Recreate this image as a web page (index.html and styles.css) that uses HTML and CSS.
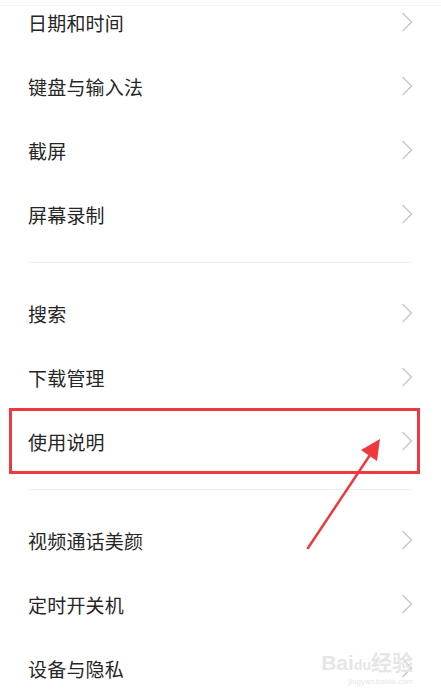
FILE: index.html
```html
<!DOCTYPE html>
<html lang="zh">
<head>
<meta charset="utf-8">
<link rel="stylesheet" href="styles.css">
</head>
<body>
<div class="page">
  <div class="topline"></div>
  <div class="list">
    <div class="group">
      <div class="row"><span class="label">日期和时间</span><svg class="chev" width="12" height="20" viewBox="0 0 12 20"><polyline points="1.5,1 10.5,10 1.5,19" fill="none" stroke="#cbcbcb" stroke-width="1.6"/></svg></div>
      <div class="row"><span class="label">键盘与输入法</span><svg class="chev" width="12" height="20" viewBox="0 0 12 20"><polyline points="1.5,1 10.5,10 1.5,19" fill="none" stroke="#cbcbcb" stroke-width="1.6"/></svg></div>
      <div class="row"><span class="label">截屏</span><svg class="chev" width="12" height="20" viewBox="0 0 12 20"><polyline points="1.5,1 10.5,10 1.5,19" fill="none" stroke="#cbcbcb" stroke-width="1.6"/></svg></div>
      <div class="row"><span class="label">屏幕录制</span><svg class="chev" width="12" height="20" viewBox="0 0 12 20"><polyline points="1.5,1 10.5,10 1.5,19" fill="none" stroke="#cbcbcb" stroke-width="1.6"/></svg></div>
    </div>
    <div class="divider"></div>
    <div class="group">
      <div class="row"><span class="label">搜索</span><svg class="chev" width="12" height="20" viewBox="0 0 12 20"><polyline points="1.5,1 10.5,10 1.5,19" fill="none" stroke="#cbcbcb" stroke-width="1.6"/></svg></div>
      <div class="row"><span class="label">下载管理</span><svg class="chev" width="12" height="20" viewBox="0 0 12 20"><polyline points="1.5,1 10.5,10 1.5,19" fill="none" stroke="#cbcbcb" stroke-width="1.6"/></svg></div>
      <div class="row highlight"><span class="label">使用说明</span><svg class="chev" width="12" height="20" viewBox="0 0 12 20"><polyline points="1.5,1 10.5,10 1.5,19" fill="none" stroke="#cbcbcb" stroke-width="1.6"/></svg></div>
    </div>
    <div class="divider"></div>
    <div class="group">
      <div class="row"><span class="label">视频通话美颜</span><svg class="chev" width="12" height="20" viewBox="0 0 12 20"><polyline points="1.5,1 10.5,10 1.5,19" fill="none" stroke="#cbcbcb" stroke-width="1.6"/></svg></div>
      <div class="row"><span class="label">定时开关机</span><svg class="chev" width="12" height="20" viewBox="0 0 12 20"><polyline points="1.5,1 10.5,10 1.5,19" fill="none" stroke="#cbcbcb" stroke-width="1.6"/></svg></div>
      <div class="row"><span class="label">设备与隐私</span><svg class="chev" width="12" height="20" viewBox="0 0 12 20"><polyline points="1.5,1 10.5,10 1.5,19" fill="none" stroke="#cbcbcb" stroke-width="1.6"/></svg></div>
    </div>
  </div>
  <svg class="arrow" width="441" height="699" viewBox="0 0 441 699">
    <line x1="308" y1="548" x2="370" y2="455" stroke="#ee3a3f" stroke-width="2.5" stroke-linecap="round"/>
    <polygon points="380,439 377,461 361,450" fill="#ee3a3f"/>
  </svg>
  <div class="watermark"><span class="wm-main">Bai<span class="wm-du">du</span>经验</span><span class="wm-sub">jingyan.baidu.com</span></div>
</div>
</body>
</html>
```

FILE: styles.css
```css
html, body {
  margin: 0;
  padding: 0;
  background: #ffffff;
}
.page {
  position: relative;
  width: 441px;
  height: 699px;
  overflow: hidden;
  font-family: "Noto Sans CJK SC", "Noto Sans", sans-serif;
}
.topline {
  height: 1px;
  background: #f4f4f4;
  margin-top: 5px;
}
.list {
  margin-top: -16px;
}
.row {
  height: 64px;
  display: flex;
  align-items: center;
  justify-content: space-between;
  padding: 0 28px 0 28px;
  box-sizing: border-box;
}
.label {
  font-size: 19px;
  color: #262626;
  letter-spacing: 0.2px;
}
.chev {
  display: block;
  flex: none;
}
.divider {
  height: 1px;
  background: #ececec;
  margin: 16px 29px 18px 28px;
}
.highlight {
  outline: 3px solid #ee3a3f;
  outline-offset: -2px;
  margin: 0 22px 0 10px;
  padding: 0 6px 0 18px;
}
.arrow {
  position: absolute;
  left: 0;
  top: 0;
  pointer-events: none;
}
.watermark {
  position: absolute;
  right: 28px;
  bottom: 12px;
  display: flex;
  flex-direction: column;
  align-items: flex-end;
  color: #e6e6e6;
  font-family: "Liberation Sans", "Noto Sans CJK SC", sans-serif;
}
.wm-main {
  font-size: 21px;
  font-weight: bold;
  line-height: 24px;
}
.wm-du {
  font-size: 14px;
}
.wm-sub {
  font-size: 8px;
  line-height: 10px;
}
```
